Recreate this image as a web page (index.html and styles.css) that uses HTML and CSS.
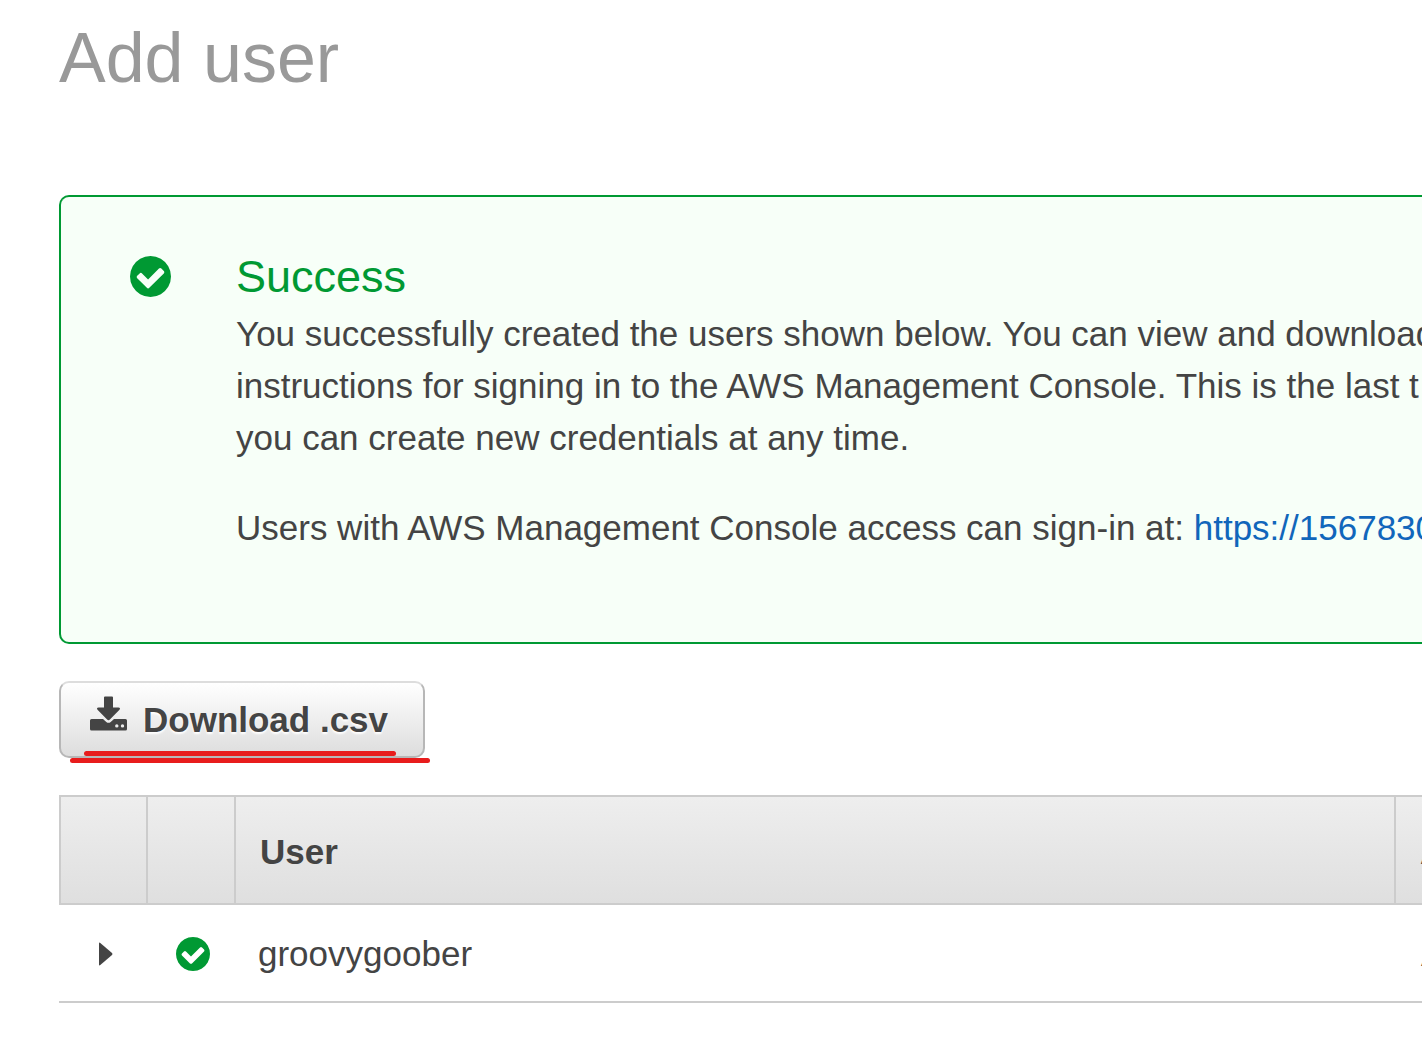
FILE: index.html
```html
<!DOCTYPE html>
<html lang="en">
<head>
<meta charset="utf-8">
<title>Add user</title>
<link rel="stylesheet" href="styles.css">
</head>
<body>
<svg class="sprite" aria-hidden="true">
  <symbol id="check" viewBox="0 0 1536 1536">
    <path d="M1284 606q0-28-18-46l-91-90q-19-19-45-19t-45 19l-408 407-226-226q-19-19-45-19t-45 19l-91 90q-18 18-18 46 0 27 18 45l362 362q19 19 45 19 27 0 46-19l543-543q18-18 18-45zm252 162q0 209-103 385.500t-279.500 279.500-385.500 103-385.500-103-279.500-279.500-103-385.500 103-385.500 279.500-279.500 385.500-103 385.500 103 279.500 279.500 103 385.500z"/>
  </symbol>
</svg>
<main class="page">
  <h1 class="title">Add user</h1>

  <section class="alert">
    <svg class="alert-icon" aria-hidden="true"><use href="#check"/></svg>
    <div class="alert-body">
      <h2 class="alert-title">Success</h2>
      <p class="alert-text">You successfully created the users shown below. You can view and download<br>instructions for signing in to the AWS Management Console. This is the last t<br>you can create new credentials at any time.</p>
      <p class="alert-text">Users with AWS Management Console access can sign-in at: <a class="link" href="#signin">https://1567830</a></p>
    </div>
  </section>

  <div class="actions">
    <button class="download" type="button">
      <svg class="download-icon" viewBox="0 0 37 35" aria-hidden="true">
        <path d="M15 0.500h7q1 0 1 1V11.500h5.500q2.400 0.300 1 2.200L19.900 23.600q-1.400 1.200-2.800 0L7.500 13.700Q6.100 11.800 8.500 11.500H14V1.500q0-1 1-1z"/>
        <path fill-rule="evenodd" d="M1.500 23H13L16.300 26q2.200 1.700 4.400 0L24 23H35.500q1.500 0 1.500 1.500V33q0 1.500-1.500 1.500H1.500Q0 34.500 0 33V24.500Q0 23 1.500 23zM26.800 28.200a1.700 1.700 0 1 0 0 3.400a1.700 1.700 0 1 0 0-3.400zM32.500 28.200a1.700 1.700 0 1 0 0 3.400a1.700 1.700 0 1 0 0-3.400z"/>
      </svg>
      Download .csv
    </button>
    <span class="mark mark-inner"></span>
    <span class="mark mark-outer"></span>
  </div>

  <table class="users">
    <colgroup>
      <col class="col-expand"><col class="col-status"><col><col class="col-key">
    </colgroup>
    <thead>
      <tr><th></th><th></th><th scope="col">User</th><th scope="col" class="key">A</th></tr>
    </thead>
    <tbody>
      <tr>
        <td class="icon-cell"><button class="expand" type="button" aria-label="Expand"><svg class="caret" viewBox="0 0 14 24" aria-hidden="true"><path d="M0 1.500Q0 0 1.300 0.900L13 11q1 1 0 2L1.300 23.100Q0 24 0 22.500z"/></svg></button></td>
        <td class="icon-cell status"><svg class="row-icon" aria-hidden="true"><use href="#check"/></svg></td>
        <td>groovygoober</td>
        <td class="key">A</td>
      </tr>
    </tbody>
  </table>
</main>
</body>
</html>
```
FILE: styles.css
```css
* { box-sizing: border-box; }

body {
  margin: 0;
  background: #fff;
  color: #444;
  font: 35px/52px "Liberation Sans", Arial, sans-serif;
  overflow-x: hidden;
}

svg { display: block; fill: currentColor; }

.sprite { position: absolute; width: 0; height: 0; }

.page { padding: 18px 0 54px 59px; }

.title {
  margin: 0 0 97px;
  color: #999;
  font-size: 70px;
  font-weight: 400;
  line-height: 80px;
}

.alert {
  display: flex;
  gap: 65px;
  padding: 54px 0 88px 69px;
  border: 2px solid #093;
  border-right: 0;
  border-radius: 10px 0 0 10px;
  background: #f7fff8;
  overflow: hidden;
}

.alert-icon {
  flex: none;
  width: 41px;
  height: 41px;
  margin-top: 5px;
  color: #093;
}

.alert-body { min-width: 0; white-space: nowrap; }

.alert-title {
  margin: 0 0 5px;
  color: #093;
  font-size: 45px;
  font-weight: 400;
  line-height: 52px;
}

.alert-text { margin: 0; }
.alert-text + .alert-text { margin-top: 38px; }

.link { color: #1166bb; text-decoration: none; }

.actions {
  position: relative;
  display: flex;
  margin: 37px 0;
}

.download {
  display: flex;
  align-items: center;
  gap: 16px;
  height: 77px;
  padding: 0 35px 0 29px;
  border: 2px solid #b7b7b7;
  border-top-color: #ddd;
  border-radius: 10px;
  background: linear-gradient(#fff, #ddd);
  color: #444;
  font: bold 35px/52px "Liberation Sans", Arial, sans-serif;
  text-shadow: 0 2px 2px #fff;
}

.download-icon { width: 37px; height: 35px; margin-bottom: 12px; }

/* Hand-drawn highlight strokes over the button */
.mark {
  position: absolute;
  height: 5px;
  border-radius: 3px;
  background: #e81c1c;
}
.mark-inner { left: 25px; top: 70px; width: 312px; }
.mark-outer { left: 11px; top: 77px; width: 360px; }

.users {
  width: 100%;
  border-collapse: separate;
  border-spacing: 0;
  table-layout: fixed;
}
.col-expand { width: 87px; }
.col-status { width: 88px; }
.col-key { width: 28px; }

.users th {
  height: 110px;
  padding: 3px 0 0 24px;
  border: 2px solid #ccc;
  border-right: 0;
  background: linear-gradient(#eee, #dfdfdf);
  text-align: left;
}

.users td {
  height: 98px;
  padding: 1px 0 0 24px;
  border-bottom: 2px solid #ccc;
}

.users .key { padding-left: 24px; overflow: hidden; }
.users td.key { padding-left: 27px; }
.users .icon-cell { padding-left: 40px; }
.users .status { padding-left: 30px; }

.expand {
  display: block;
  padding: 0;
  border: 0;
  background: none;
  color: #444;
}
.caret { width: 14px; height: 24px; }
.row-icon { width: 34px; height: 34px; color: #093; }
```
